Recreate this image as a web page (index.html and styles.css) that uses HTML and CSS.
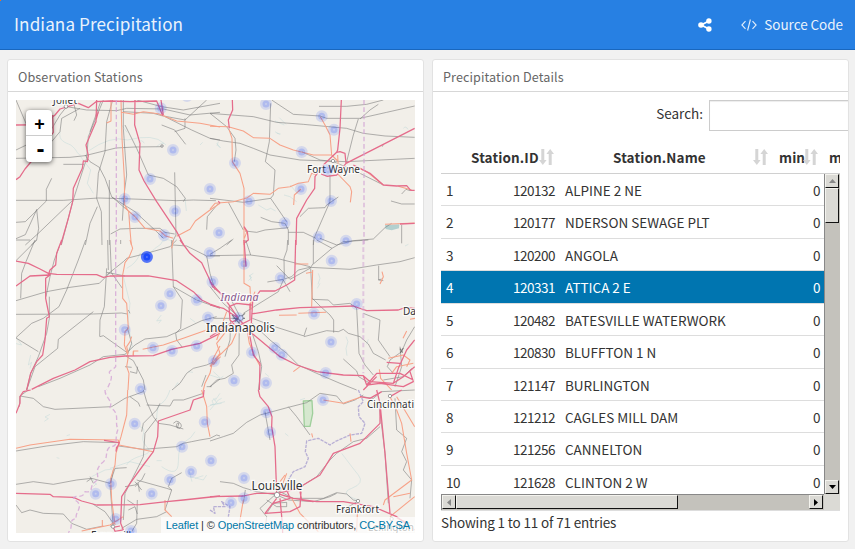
FILE: index.html
```html
<!DOCTYPE html>
<html lang="en">
<head>
<meta charset="utf-8">
<title>Indiana Precipitation</title>
<link rel="stylesheet" href="styles.css">
</head>
<body>
<header class="navbar">
  <h1 class="brand">Indiana Precipitation</h1>
  <nav class="links">
    <svg class="share" viewBox="0 0 14 14"><path d="M11 3 3.2 7 11 11" fill="none" stroke="#fff" stroke-width="1.8"/><circle cx="3" cy="7" r="2.8"/><circle cx="10.9" cy="3" r="2.7"/><circle cx="10.9" cy="11" r="2.7"/></svg>
    <svg class="code" viewBox="0 0 16 12"><path d="M4.5 2.2.9 6l3.6 3.8M11.5 2.2 15.1 6l-3.6 3.8M9.4.5 6.6 11.5"/></svg>
    <span class="source">Source Code</span>
  </nav>
</header>
<main class="dashboard">
  <section class="panel map-panel">
    <h2 class="panel-title">Observation Stations</h2>
    <div class="map">
      <svg class="map-canvas" viewBox="16 100 399 433">
        <g transform="translate(10 95) scale(.33333)">
          <path class="water" d="M150 110C145 138 165 142 182 150 202 164 200 178 212 180M385 145q8 -16 18 0M440 155q18-18 28-5M570 150l8-8M625 140l-4 12M525 310l4 38M460 440q15-12 25 0M335 90l16 22M212 185l30 40-10 40 18 30M232 170q70-50 120-35 80-20 110 10"/>
          <path class="rail" d="M18 190 180 187 225 182 318 159 375 156 457 155M160 208H222M18 316H160L265 309 340 311 500 317 550 315 618 317M280 15 235 125 230 190 188 320 154 450M272 20 240 110M308 15 290 80 285 170 265 235 260 310 274 350 276 450M225 180 240 200 268 217 285 250 305 305 340 335 375 365M262 335 240 385 226 450M298 255V450M125 250 109 283V318L46 380 18 382M186 318 85 415 46 450M80 343 86 400 80 435 64 450M18 431 46 419 80 344M18 15 50 90M18 165 70 140 120 110 150 60 170 35 230 45 320 47 350 40 460 42 540 60 630 52M125 140 150 110 155 70 210 40M190 20 200 60 192 77M345 90 380 160 415 240 460 250 500 275 526 310 520 320M494 232 498 420 485 445M380 15 455 35 520 45 630 25M340 50 430 55 455 62 525 75 590 15M525 70 525 100 494 110M455 90 494 105 527 148M465 65 545 105 600 130 630 135M340 15V100L350 240 342 300 337 377M302 417 330 402 380 400 450 400 465 412 494 417M305 306 375 350 440 410 460 430M590 404 592 365 625 325"/>
          <path class="trunk" d="M303 15V78L290 84M333 15 336 130 343 250 344 330 356 350 360 405 364 450M335 52 370 58 400 50 445 56 500 78 570 85 630 96M344 338 375 365 405 400 450 408 465 422 490 430M500 424 540 403 556 378 600 345 630 325"/>
          <path class="motorway" d="M260 15 258 80 228 150 235 182 232 200 220 198 217 220 190 280 188 320 175 370 152 450M375 15 374 90 390 145 387 225 402 258 440 320 500 410 521 450M18 90 100 89 135 60 150 42 205 25 235 38 258 20 300 18 360 20 440 18 458 62M18 254 30 245 45 222 80 180 130 112 128 60M265 50 258 75M453 15 460 60"/>
          <path class="boundary" d="M319 15V440"/>
        </g>
        <g transform="translate(210 95) scale(.33333)">
          <path class="water" d="M195 78l28 12M208 68l20 20M195 110l14 8M20 145l12 14M22 150l8 8M200 115l12 2M145 330l25 15 12-5 15 8M222 300l18 5 20 15M580 100q8-8 14 3M240 270l22 25"/>
          <path class="lake" d="M525 390 568 388 567 400 545 406 527 402Z"/>
          <path class="rail" d="M0 55 50 95 75 130 78 165 73 200M0 55 130 65 200 82 280 88 410 100 460 115 525 123 614 127M185 15 250 58 330 63 350 70 450 70 530 52 614 33M182 25 178 140 166 200 195 225 190 300 182 310 230 380M327 34 410 34 470 28 520 15M450 72 480 45 505 28M0 130 40 138 90 145 130 160 180 180 270 195 410 200 614 190M445 72 430 120 410 200M275 170 330 195 370 200 430 225 520 270M0 310 100 322 182 310M55 322 100 405M385 306 350 330 345 338 295 340 270 365M360 240V320L312 430 310 450M520 148 517 155M575 297 588 283 600 287M543 318 575 327 614 327M152 367 185 380 225 385 235 405 235 450M105 408 140 412 165 405 235 398M235 412 280 412 318 430M330 430 380 450 430 437 490 432 525 398 545 385M575 390V445M50 450 70 432"/>
          <path class="trunk" d="M57 103 66 130 67 200 90 235 102 280V450M0 94 55 95 100 108 130 128 180 130 210 150 250 165 310 180 365 180 383 198M331 65 345 90 360 120 365 180M383 180 386 240 420 275 425 290 421 322M0 342 15 325 70 320 112 308 130 295 180 298 205 280 240 275 265 265 295 260 305 235 320 240M273 282 253 300 251 330M440 215 470 230 520 270M565 274 605 285M525 388 614 384M102 395 110 412 103 430"/>
          <path class="motorway" d="M67 15 68 45 55 75 58 100M394 15 390 100 383 165 380 172 390 170 405 175 408 205 614 100M380 172 340 210 315 245 314 280 290 315 260 370 258 450M408 205 380 240 352 244 333 237M430 210 450 220 480 235 520 270 560 273 590 272 602 286 614 286M25 318 30 325M102 395 112 410 115 435 102 445M570 387 614 385"/>
          <path class="boundary wide" d="M462 15V450"/>
          <circle class="town" cx="369" cy="198" r="5"/>
        </g>
        <g transform="translate(10 240) scale(.33333)">
          <path class="water" d="M340 110 360 190 355 240 362 300 368 320 340 350M454 225l-14 18 14-3-8 10M20 295l15 20-20-5M62 345l-7 30 10-8-5 18M540 235l16 12M350 85q30-15 40-45 25 10 45-15 20-10 25-25M535 395l14 2M495 440l8-12 3 6"/>
          <path class="rail" d="M18 182 110 155 180 142 268 130 300 98M18 0 60 0M75 0 48 65 35 100 32 175M148 20 133 60 120 110 108 170M227 0 205 60 170 150 147 200 100 235 65 250 18 293M18 294 85 335M18 223 250 222 335 219 352 222M18 62 80 0M250 215 145 298 143 325 75 380 50 450M118 170V235L110 280 85 350 62 400 50 450M290 85 283 200 270 240 269 290M300 0 304 98 337 145M293 0 295 90M290 105 340 65 350 55 410 40 480 20 500 0M290 97 345 108M332 0V12M270 290 280 287 350 337M85 440 150 415 240 375 280 350 345 343 375 315 405 297 470 290 520 268 575 242 620 230M352 262 365 310 350 350 370 362 400 420 405 450M345 380 365 382M360 395 380 400 383 380M355 210 360 220M485 0 490 140 517 180 512 265 497 280 500 300 517 322M490 140 560 180 630 205M488 15 530 18 590 48 630 48M590 48 600 100 615 150M486 450 510 430 530 400 550 385 590 375 612 365M575 440 588 405M600 440 630 417M590 440 605 440"/>
          <path class="trunk" d="M360 0 368 25 358 50 345 68 338 105V175L350 190 355 265 345 275 343 315 355 350 350 380 357 400 354 450M355 340 350 320 360 305 365 290M370 348 371 332M398 328 460 315 520 295 588 271M369 345 370 333 385 333M630 318 610 355 600 400 585 430 580 450M632 350 600 380M490 0 485 25"/>
          <path class="motorway" d="M18 63 55 70 90 87 115 100 140 103 260 104 280 112 300 108 415 108 500 122 550 155 575 180 600 192 630 203M18 138 60 108 120 105 107 115V175L118 230 110 235 105 300 98 345 80 365 62 400 50 450M155 0 140 40 137 75 120 90 115 105M65 448 130 415 195 390 240 365 300 352 345 348 430 347 485 328 570 310 630 280M510 0 540 40 575 68 595 110 608 140 632 160"/>
          <path class="boundary" d="M317 0V380C310 390 292 392 300 402 310 410 300 428 290 450"/>
        </g>
        <g transform="translate(210 240) scale(.33333)">
          <path class="water" d="M130 100l-13 8 8 4-10 10M120 105l4 18M325 100l5 15-6 18M408 290l6 15-6 20 3 22M0 405l30 10 10-6M475 298l-5 15M585 18l10-5M165 400l12 10M10 395l20 18M330 130l-8 15"/>
          <path class="rail" d="M0 43 30 25 65 0M0 47 120 45 200 55 300 80M107 0 122 45M233 0 231 30 222 55 223 115M200 77 240 118 300 85M172 126 220 118 245 110 265 90 300 82 420 88 500 75 570 65 614 53M220 120 205 155 100 220M300 85 310 70 310 0M310 72 366 25 400 5 475 0M320 0 366 25M302 85 307 178 355 180 370 195 420 190 440 205 447 340 465 375 490 405M307 175 330 198 360 225 371 240V278M127 235 200 262 282 288 290 263M282 290 350 272 385 275 400 268 415 280 450 290 475 312 490 340 527 360M460 220 510 240 505 300 540 350M506 77V120L520 122M505 120 515 117M400 357 440 393 446 410 480 430M127 250 180 300 230 340 265 375 320 400 390 430 440 450M62 240 60 300 45 350M88 240 87 345 65 375 70 400 45 415 20 420 0 440M220 120 240 155M64 180 90 230M0 140 40 190 85 230M614 260 590 300 575 335 540 360 532 380 550 400M120 260 145 335 155 380 145 450M10 235 85 235M570 320 575 380 555 440M520 420 580 410 605 385"/>
          <path class="trunk" d="M102 0V130L120 140 123 210M135 155 125 180 120 205M255 72H295M288 100 305 97M308 90 305 200M207 226 260 225M265 220 348 217M516 95 520 110 510 132M615 235 600 238M590 273 579 295M110 260 118 310 135 350 150 378M85 265 65 310 25 350 10 375M57 263 20 310 30 340 0 378M50 215 20 300M250 395 270 380M508 388 512 415 545 450M535 355 580 345 600 360 590 380M610 370 560 380 545 400M0 275 40 267"/>
          <path class="motorway" d="M102 0 108 80M257 0 254 120 230 135 195 153 150 153 128 185 124 250M0 125 40 170 85 235 120 275 150 300 210 350 260 375 320 395 400 405 460 407 480 425 550 430 580 410 614 380M57 200 60 240 80 260 120 240 120 190M57 200 80 190 125 195M124 222 200 210 270 203 380 200 430 198 455 207 470 212 565 210 585 203 614 205M0 195 40 205 85 235 40 265 0 290M110 255 120 290 130 345 150 370 148 450M614 300 590 330 565 385 550 430M470 435 500 400 570 400 610 420M460 407 470 435 510 430 580 440 610 425 600 395M530 367 570 370M460 450 500 410"/>
          <path class="boundary wide" d="M460 0V400"/>
          <path class="rail dark" d="M570 326 578 338M580 324 571 338M66 225 88 250M75 245 105 220M70 235H105"/>
          <circle class="town" cx="92" cy="234" r="7"/>
        </g>
        <g transform="translate(10 390) scale(.33333)">
          <path class="water" d="M120 73l-15 8 10 5-12 8M595 50l15-8-4-10 12-8M630 10l-15 22M170 137l10-3M140 203l8 2M440 212h15M245 265l15 20M250 290l10-10M538 245l8 30M540 260l40 10 10-15M555 265l25-8M390 110c30 10-10 30 20 60s-40 20-60 55M300 235l60-20 60 15M480 0q-10 30-25 40t-15 45M555 125q-10 20-30 30t-20 60-50 15M245 260l40-20 40-5"/>
          <path class="rail" d="M30 18 70 25 100 50 135 58 305 50 345 25 400 5M55 0 30 18 28 50M18 183 110 168 220 155 325 158M325 168 400 178 500 170 520 160 545 155 570 150 600 145 620 135 630 138M18 283 70 275 130 283 200 270 245 265 300 280M245 265 230 275M300 280 315 235 350 233M18 345 35 368 60 360 100 370 160 372 185 400 230 418 280 408M355 360 375 350 382 372M300 285 310 410M375 345 352 330M360 20 385 38 390 50M400 0 410 35 430 80 445 100 480 105 520 117M395 125 400 100 440 60 450 40M410 45 480 48 490 30 520 30 580 10M440 85 405 130 400 200 380 240 345 310 340 390M310 240 302 280M345 290 375 285 395 270 405 250M375 275 395 300M380 270 470 295 485 300M515 248 485 265 475 290 485 300 465 360M248 342 285 365 310 400 300 410M382 330 380 400 365 425M335 415 380 388 440 380 470 365M240 260 250 280"/>
          <path class="rail" d="M490 100q10-10 15-5 15 10 5 20-15 0-10-12 0-5 7-4l-5 15M375 290 385 280 388 305"/>
          <path class="trunk" d="M18 175 60 165 180 148 325 150 327 165 430 185M353 0 350 75 333 140 318 190 315 225 302 265 305 330 315 405M575 0 590 50 592 100 600 140M277 390V410M215 423 300 405 340 380M465 330 465 360 485 380"/>
          <path class="motorway" d="M18 70 30 40 30 20 40 5 62 0M282 151 328 158 318 180M320 170 318 185M582 0 580 20 550 30 540 60 445 93 443 140 430 185 400 225 360 280 335 320 332 400 340 420 315 424 310 412 330 408M18 310 120 313 130 320 190 322 215 333 260 345 390 344 470 335 520 330 630 318"/>
          <path class="boundary" d="M285 0C285 25 310 30 300 52 335 70 310 105 325 115 310 150 330 170 300 170 280 190 300 200 275 220 245 250 280 260 250 280 240 290 250 310 225 305 220 330 190 310 190 328 230 345 190 370 200 385 170 390 195 405 175 428"/>
          <circle class="town" cx="309" cy="410" r="5"/>
        </g>
        <g transform="translate(210 390) scale(.33333)">
          <path class="water" d="M0 45l35-5M0 60l25-30 10-5M5 45l40-10M10 25l12 15M395 190q30 40 50 65t-20 40 20 35M270 30l15-5M225 130l10 8M240 260l-8 18"/>
          <path class="park" d="M280 33 306 32 308 70 300 109H283Z"/>
          <path class="boundary river" d="M445 0 460 35 445 50 447 80 465 100 455 130 420 135 375 155 360 165 325 145 290 153 286 185 295 205 285 230 250 245 232 275 210 300M0 360 15 370 10 350 45 350 35 335 60 350 55 380"/>
          <path class="rail" d="M0 153 40 140 70 130 110 97 150 75 235 52 290 38 330 10 380 18 400 42 435 30 460 15M235 50 260 80 300 135M165 65 180 150M30 275 70 280 100 293 140 305 200 315M200 310 150 355 170 380 165 420M200 300 250 325 340 325 380 308 410 312 430 330 444 333 400 360M510 110 470 145 430 155 380 190 360 210 320 260 280 285M508 50 525 190 535 340M555 25 560 120 590 145 575 185 590 215 580 240 605 270 600 325M106 300 100 340M200 315 235 330 310 335 360 320 380 310M170 330 200 350 230 350 230 337 190 340 170 370M455 20 490 25 515 5 614 0"/>
          <path class="trunk" d="M340 30 400 40 455 20M100 330 85 420M230 250 215 290M210 275 225 255M305 130 308 142M420 130 423 155M245 325 270 370 325 425M540 20 560 60 575 100 590 190 605 270 525 330 520 345M614 320 540 380M560 20 614 110M443 345 440 425M600 400 560 385M550 320 600 310"/>
          <path class="motorway" d="M145 0 150 20 175 50 186 80 185 110 195 170 200 310M200 310 140 310 100 318 0 320M200 310 270 295 280 285 330 255 370 190 450 160 510 100 510 40 500 0M510 40 525 190 540 370M200 310 250 325 320 335 400 335 490 350 560 380 614 420M200 325 165 370 240 365 270 350 273 305M210 325 217 400 218 430M230 300 240 325 190 340M270 305 275 330 310 335M450 20 480 25 515 5M540 20 575 0"/>
          <circle class="town" cx="201" cy="315" r="8"/><circle class="town" cx="444" cy="333" r="5"/><circle class="town" cx="540" cy="18" r="5"/><circle class="town" cx="545" cy="387" r="5"/>
        </g>
        <circle class="town" cx="162" cy="146" r="1.2"/><circle class="town" cx="66" cy="106.500" r="1.800"/>
        <g class="labels">
          <text x="53" y="103.500" font-size="10" textLength="24">Joliet</text>
          <text x="307" y="173" font-size="10" textLength="53">Fort Wayne</text>
          <text x="206" y="332" font-size="12" textLength="69">Indianapolis</text>
          <text class="state" x="220.500" y="300.500" font-size="10.500" textLength="38">Indiana</text>
          <text x="403" y="315" font-size="10">Da</text>
          <text x="367" y="408" font-size="10" textLength="47">Cincinnati</text>
          <text x="251.500" y="490" font-size="12" textLength="51">Louisville</text>
          <text x="336" y="513" font-size="10" textLength="43">Frankfort</text>
          <text x="368" y="531" font-size="10" textLength="46">Lexington</text>
          <text x="91" y="539" font-size="10">Evansville</text>
        </g>
        <g class="stations">
          <circle cx="160.700" cy="108.300" r="3.500"/><circle cx="173" cy="150" r="3.500"/><circle cx="150" cy="179" r="3.500"/><circle cx="210" cy="189" r="3.500"/><circle cx="124.700" cy="199" r="3.500"/><circle cx="175" cy="211" r="3.500"/><circle cx="135" cy="217" r="3.500"/><circle cx="164" cy="235" r="3.500"/><circle cx="219" cy="232.700" r="3.500"/><circle cx="187" cy="96" r="3.500"/>
          <circle cx="266" cy="104" r="3.500"/><circle cx="321.700" cy="116.300" r="3.500"/><circle cx="334" cy="129.700" r="3.500"/><circle cx="301.700" cy="152" r="3.500"/><circle cx="235" cy="163" r="3.500"/><circle cx="327.700" cy="170" r="3.500"/><circle cx="301" cy="189" r="3.500"/><circle cx="331" cy="201" r="3.500"/><circle cx="249" cy="201.300" r="3.500"/><circle cx="284.500" cy="223" r="3.500"/><circle cx="318.700" cy="237" r="3.500"/><circle cx="346" cy="240.700" r="3.500"/>
          <circle cx="209.700" cy="253" r="3.500"/><circle cx="212.500" cy="281.800" r="3.500"/><circle cx="170" cy="293.700" r="3.500"/><circle cx="161" cy="305.700" r="3.500"/><circle cx="196.700" cy="300" r="3.500"/><circle cx="208" cy="317.500" r="3.500"/><circle cx="124.700" cy="329.700" r="3.500"/><circle cx="153" cy="347.700" r="3.500"/><circle cx="172" cy="351" r="3.500"/><circle cx="196.700" cy="346" r="3.500"/><circle cx="214" cy="361" r="3.500"/><circle cx="140.700" cy="389" r="3.500"/>
          <circle cx="244" cy="263.700" r="3.500"/><circle cx="331.700" cy="260.700" r="3.500"/><circle cx="280.700" cy="278" r="3.500"/><circle cx="356.700" cy="304" r="3.500"/><circle cx="314" cy="313.700" r="3.500"/><circle cx="331" cy="342" r="3.500"/><circle cx="274.700" cy="347.700" r="3.500"/><circle cx="281.700" cy="354.700" r="3.500"/><circle cx="252" cy="352.500" r="3.500"/><circle cx="325.700" cy="373" r="3.500"/><circle cx="234" cy="380.700" r="3.500"/><circle cx="266" cy="383" r="3.500"/><circle cx="238" cy="318" r="3.500"/>
          <circle cx="134.700" cy="423.700" r="3.500"/><circle cx="204.700" cy="422" r="3.500"/><circle cx="182" cy="446.700" r="3.500"/><circle cx="211" cy="460.700" r="3.500"/><circle cx="191" cy="471.700" r="3.500"/><circle cx="170" cy="479.700" r="3.500"/><circle cx="111" cy="484" r="3.500"/><circle cx="95.700" cy="493.700" r="3.500"/><circle cx="151.700" cy="493.700" r="3.500"/><circle cx="115.700" cy="519" r="3.500"/><circle cx="131" cy="531" r="3.500"/>
          <circle cx="323" cy="400" r="3.500"/><circle cx="266.500" cy="412.300" r="3.500"/><circle cx="270" cy="432.300" r="3.500"/><circle cx="244" cy="478" r="3.500"/><circle cx="244" cy="498.300" r="3.500"/><circle cx="231" cy="502.700" r="3.500"/>
          <circle class="selected" cx="146.900" cy="256.900" r="3.500"/>
        </g>
      </svg>
      <div class="zoom"><span>+</span><span class="minus">-</span></div>
      <div class="attribution"><a>Leaflet</a> | © <a>OpenStreetMap</a> contributors, <a>CC-BY-SA</a></div>
    </div>
  </section>
  <section class="panel table-panel">
    <h2 class="panel-title">Precipitation Details</h2>
    <div class="details">
      <div class="search"><span class="search-label">Search:</span><span class="search-box"></span></div>
      <div class="thead">
        <b class="h-id">Station.ID</b><svg class="sort" viewBox="0 0 15 17"><path d="M2.300 0h3v11h2.300L3.800 16 0 11h2.300zM9.700 16h3V5H15L11.200 0 7.400 5h2.300z"/></svg>
        <b class="h-name">Station.Name</b><svg class="sort" viewBox="0 0 15 17"><path d="M2.300 0h3v11h2.300L3.800 16 0 11h2.300zM9.700 16h3V5H15L11.200 0 7.400 5h2.300z"/></svg>
        <b class="h-min">min</b><svg class="sort" viewBox="0 0 15 17"><path d="M2.300 0h3v11h2.300L3.800 16 0 11h2.300zM9.700 16h3V5H15L11.200 0 7.400 5h2.300z"/></svg>
        <b class="h-max">max</b>
      </div>
      <div class="scroller">
        <div class="rows">
          <div class="row"><span>1</span><span class="num">120132</span><span class="name">ALPINE 2 NE</span><span class="num">0</span></div>
          <div class="row"><span>2</span><span class="num">120177</span><span class="name">NDERSON SEWAGE PLT</span><span class="num">0</span></div>
          <div class="row"><span>3</span><span class="num">120200</span><span class="name">ANGOLA</span><span class="num">0</span></div>
          <div class="row active"><span>4</span><span class="num">120331</span><span class="name">ATTICA 2 E</span><span class="num">0</span></div>
          <div class="row"><span>5</span><span class="num">120482</span><span class="name">BATESVILLE WATERWORK</span><span class="num">0</span></div>
          <div class="row"><span>6</span><span class="num">120830</span><span class="name">BLUFFTON 1 N</span><span class="num">0</span></div>
          <div class="row"><span>7</span><span class="num">121147</span><span class="name">BURLINGTON</span><span class="num">0</span></div>
          <div class="row"><span>8</span><span class="num">121212</span><span class="name">CAGLES MILL DAM</span><span class="num">0</span></div>
          <div class="row"><span>9</span><span class="num">121256</span><span class="name">CANNELTON</span><span class="num">0</span></div>
          <div class="row"><span>10</span><span class="num">121628</span><span class="name">CLINTON 2 W</span><span class="num">0</span></div>
        </div>
        <div class="vbar">
          <div class="btn"><svg viewBox="0 0 7 4"><path class="off" d="M0 4 3.500 0 7 4z"/></svg></div>
          <div class="vthumb"></div>
          <div class="btn end"><svg viewBox="0 0 7 4"><path d="M0 0h7L3.500 4z"/></svg></div>
        </div>
        <div class="hbar">
          <div class="btn"><svg class="side" viewBox="0 0 4 7"><path class="off" d="M4 0v7L0 3.500z"/></svg></div>
          <div class="hthumb"></div>
          <div class="btn right"><svg class="side" viewBox="0 0 4 7"><path d="M0 0v7l4-3.500z"/></svg></div>
        </div>
        <div class="corner"></div>
      </div>
      <div class="info">Showing 1 to 11 of 71 entries</div>
    </div>
  </section>
</main>
</body>
</html>
```
FILE: styles.css
```css
* { box-sizing: border-box; }
body {
  margin: 0;
  width: 855px;
  height: 549px;
  overflow: hidden;
  background: #f1f1f1;
  color: #333;
  font: 13.5px/21.43px "Noto Sans CJK SC", sans-serif;
}
svg { display: block; }
.navbar {
  height: 50px;
  padding: 0 12px 0 14px;
  display: flex;
  align-items: center;
  justify-content: space-between;
  background: linear-gradient(135deg, #f07020 1px, transparent 1px) #2780e3;
  border-bottom: 1px solid #1967be;
  color: #fff;
}
.brand { margin: -1px 0 0; font-size: 17.1px; font-weight: 400; letter-spacing: .1px; opacity: .9; }
.links { display: flex; align-items: center; }
.share { width: 14px; height: 14px; fill: #fff; margin-right: 29px; }
.code { width: 16px; height: 12px; fill: none; stroke: #e4effb; stroke-width: 1.1; margin-right: 7px; }
.source { opacity: .9; letter-spacing: -.05px; }

.dashboard { display: flex; gap: 8px; padding: 9px 6px 7px 7px; height: 499px; }
.panel {
  height: 483px;
  background: #fff;
  border: 1px solid #e2e2e2;
  border-radius: 3px;
  overflow: hidden;
}
.map-panel { width: 417px; }
.table-panel { width: 417px; }
.panel-title {
  margin: 0;
  height: 32px;
  padding: 6px 10px 0;
  border-bottom: 1px solid #d7d7d7;
  font-size: 12.6px;
  line-height: 22px;
  font-weight: 400;
  letter-spacing: .1px;
  color: #666;
}
.map { position: relative; width: 399px; height: 433px; margin: 8px; overflow: hidden; background: #f2efe9; }
.map-canvas { width: 399px; height: 433px; }
.map-canvas path { fill: none; stroke-linejoin: round; }
.map-canvas .water { stroke: #bfd9d8; stroke-width: 2; opacity: .7; }
.map-canvas .lake { fill: #b3d0cf; }
.map-canvas .rail { stroke: #777; stroke-width: 2.5; opacity: .68; }
.map-canvas .dark { stroke: #555; stroke-width: 3.4; }
.map-canvas .trunk { stroke: #f7a288; stroke-width: 3.2; }
.map-canvas .motorway { stroke: #e56c8b; stroke-width: 3.8; }
.map-canvas .boundary { stroke: #d4a5d6; stroke-width: 4; stroke-dasharray: 14 8; opacity: .8; }
.map-canvas .wide { stroke-width: 6; opacity: .55; }
.map-canvas .river { stroke: #a99fcf; stroke-dasharray: 10 3; }
.map-canvas .park { fill: #d6e8cf; stroke: #9fcf9b; stroke-width: 4; }
.town { fill: #fff; stroke: #777; stroke-width: 2; }
.map-canvas > .town { stroke-width: .8; }
.labels text {
  font-family: "Noto Sans", sans-serif;
  fill: #333;
  stroke: #fff;
  stroke-opacity: .75;
  stroke-width: 2.5px;
  paint-order: stroke;
}
.labels .state { fill: #86568c; font-style: italic; }
.stations circle { fill: #03f; fill-opacity: .17; stroke: #03f; stroke-opacity: .12; stroke-width: 5; }
.stations .selected { fill-opacity: .65; stroke-opacity: .65; }
.zoom {
  position: absolute;
  left: 10px;
  top: 10px;
  width: 26px;
  height: 52px;
  border-radius: 4px;
  background: #fff;
  box-shadow: 0 1px 5px rgba(0,0,0,.65);
}
.zoom span { display: block; height: 26px; border-bottom: 1px solid #ccc; text-align: center; font: bold 18px/28px "Liberation Sans", sans-serif; color: #000; padding-left: 1px; }
.zoom .minus { border: 0; font-size: 24px; line-height: 25px; padding-left: 3px; }
.attribution {
  position: absolute;
  right: 0;
  bottom: 0;
  padding: 0 5px;
  background: rgba(255,255,255,.7);
  font: 11px/16px "Liberation Sans", sans-serif;
  letter-spacing: -.1px;
}
.attribution a { color: #0078a8; }

.details { padding: 8px; width: 415px; }
.search { display: flex; justify-content: flex-end; margin-right: -9px; height: 31px; }
.search-label { padding-top: 3px; margin-right: 6px; }
.search-box { width: 140px; border: 1px solid #ccc; box-shadow: inset 0 1px 1px rgba(0,0,0,.075); flex: none; }
.thead {
  width: 399px;
  height: 43px;
  padding: 16px 0 0 30px;
  display: flex;
  overflow: hidden;
  border-bottom: 1px solid #d0d0d0;
}
.thead > * { flex: none; }
.thead b { letter-spacing: .12px; }
.sort { width: 15px; height: 17px; margin-top: 2px; fill: #d5d5d5; }
.h-id { width: 68px; }
.h-name { width: 140px; margin-left: 59px; }
.h-min { width: 24px; margin-left: 11px; }
.h-max { margin-left: 11px; }
.scroller {
  width: 399px;
  height: 337px;
  display: grid;
  grid-template-columns: 383px 16px;
  grid-template-rows: 320px 16px;
  border-bottom: 1px solid #ddd;
}
.rows { overflow: hidden; }
.row {
  height: 32.43px;
  padding: 6px 4px 0 5px;
  border-bottom: 1px solid #ddd;
  display: grid;
  grid-template-columns: 50px 59px 1fr 20px;
  white-space: nowrap;
}
.row span:first-child { letter-spacing: -.45px; }
.num { text-align: right; letter-spacing: -.5px; }
.name { padding-left: 10px; }
.active { background: #0075b0; color: #fff; }
.vbar, .hbar { display: flex; background: #c4c2bc; }
.vbar { flex-direction: column; border-left: 1px solid #888; }
.hbar { border-top: 1px solid #888; border-left: 1px solid #888; }
.btn, .vthumb, .hthumb {
  background: #dbdad5;
  border: 1px solid #f4f3ee;
  border-right-color: #111;
  border-bottom-color: #111;
  flex: none;
}
.btn { width: 14px; height: 14px; display: grid; place-items: center; }
.btn svg { width: 7px; height: 4px; }
.btn .side { width: 4px; height: 7px; }
.btn .off { fill: #888; }
.vthumb { width: 14px; height: 35px; }
.end { margin-top: auto; }
.hthumb { width: 222px; height: 14px; }
.right { margin-left: auto; margin-right: 1px; }
.corner { background: #dbdad5; }
.info { margin-top: 1px; letter-spacing: -.15px; }
```
